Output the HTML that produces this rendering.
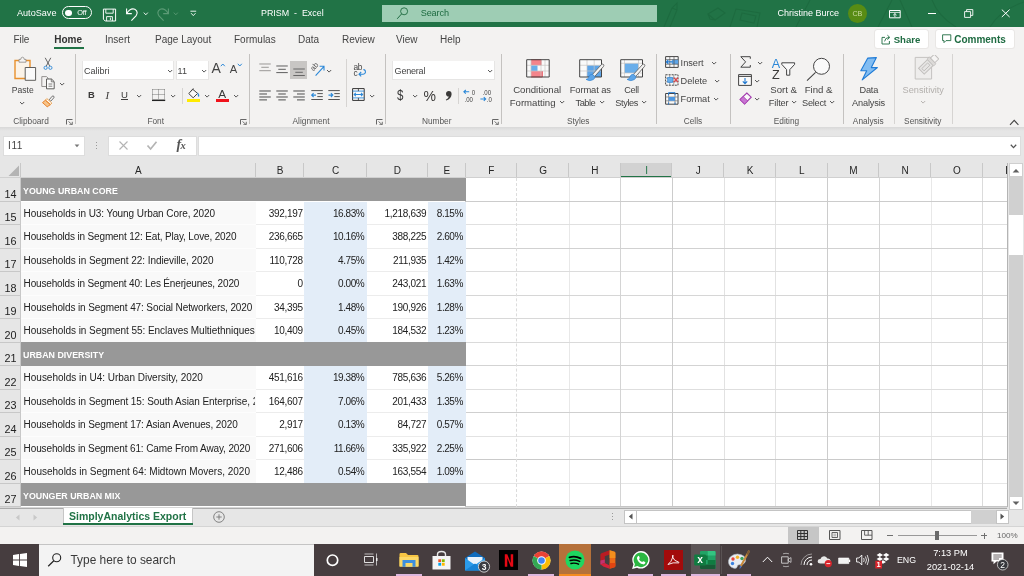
<!DOCTYPE html>
<html>
<head>
<meta charset="utf-8">
<title>PRISM - Excel</title>
<style>
*{box-sizing:border-box;margin:0;padding:0}
html,body{width:1024px;height:576px;overflow:hidden;background:#fff}
body{font-family:"Liberation Sans",sans-serif;font-size:10px;color:#323130;position:relative}
.abs,.t,#app div,#app span,#app svg{position:absolute}
#app{position:absolute;left:0;top:0;width:1024px;height:576px;overflow:hidden}
.t{white-space:pre;line-height:1}
/* title bar */
#title{left:0;top:0;width:1024px;height:27px;background:#217346}
#title .t{color:#fff;font-size:9.2px}
/* tabs */
#tabs{left:0;top:27px;width:1024px;height:25px;background:#f3f2f1}
#tabs .t{font-size:10px;top:8px;color:#444}
/* ribbon */
#ribbon{left:0;top:52px;width:1024px;height:75px;background:#f3f2f1}
#ribbon .t{font-size:9px;color:#444}
#ribbon .sep{width:1px;top:3px;height:69px;background:#c8c6c4}
#ribbon .glabel{font-size:8.3px;color:#555;top:65px}
/* formula bar */
#fbar{left:0;top:127px;width:1024px;height:36px;background:#e6e6e6}
/* grid */
#grid{left:0;top:163px;width:1007px;height:344px;background:#fff;overflow:hidden}
#colhdr{left:0;top:0;width:1007px;height:15px;background:#e6e6e6}
#colhdr .t{font-size:10px;color:#222;top:3px;text-align:center}
#rowhdr{left:0;top:15px;width:21px;height:330px;background:#e6e6e6}
#rowhdr .t{font-size:11.5px;color:#222;left:0;width:20px;text-align:center}
.cell{font-size:10px;color:#222}

.ch{font-size:10px;text-align:center}
.hl{height:1px;background:#d9d9d9}
.vl{width:1px;background:#d9d9d9}
.vl.dash{background:none;border-left:1px dashed #dcdcdc}
.rn{left:0;width:21px;text-align:center;font-size:10.8px;color:#222}
.hd{font-weight:bold;color:#fff;font-size:10px}
.lb{letter-spacing:-0.05px}
.nm{text-align:right;letter-spacing:-0.3px}
.pc{letter-spacing:-0.45px}
.ul{top:30px;height:2px;background:#dcb6de}
/* bottom */
#sheetbar{left:0;top:507px;width:1024px;height:19px;background:#e6e6e6}
#status{left:0;top:526px;width:1024px;height:18px;background:#f3f2f1}
#taskbar{left:0;top:544px;width:1024px;height:32px;background:#463d3f}
</style>
</head>
<body>
<div id="app">

<!-- TITLE BAR -->
<div id="title">
  <!-- faint doodle pattern -->
  <svg style="left:560px;top:0" width="464" height="27" viewBox="0 0 464 27"><g fill="none" stroke="#1d6a3f" stroke-width="1.1" opacity="0.9">
    <path d="M104 27L112 8L117 3L117 10L110 27M112 8L117 10"/><path d="M148 14L158 8L165 13L155 20Z M148 14L150 19L155 20"/><path d="M170 27L176 9L200 13L197 27M182 13L196 16L194 23L180 20Z"/>
    <path d="M236 27L250 0M318 27L332 0M340 0L352 27"/><path d="M372 0Q378 16 396 27M430 27Q440 10 464 2"/></g></svg>
  <span class="t" style="left:17px;top:8.6px;font-size:9.1px">AutoSave</span>
  <!-- toggle -->
  <div style="left:62px;top:6.3px;width:30px;height:12.6px;border:1px solid #fff;border-radius:7px"></div>
  <div style="left:65.3px;top:9.6px;width:6.4px;height:6.4px;border-radius:3.2px;background:#fff"></div>
  <span class="t" style="left:77.3px;top:9.2px;font-size:7.4px;letter-spacing:-0.2px">Off</span>
  <!-- save -->
  <svg style="left:102px;top:7.5px" width="15" height="14" viewBox="0 0 15 14"><path d="M1.4 1.1H13.6V13H3.2L1.4 11.2Z" fill="none" stroke="#fff" stroke-width="1"/><path d="M3.8 1.1V5.2H11.2V1.1M4.6 13V8.6H10.4V13M8.4 9.6V12" fill="none" stroke="#fff" stroke-width="0.9"/></svg>
  <!-- undo -->
  <svg style="left:125px;top:7px" width="14" height="15" viewBox="0 0 14 15"><path d="M1.6 1.4V6.6H6.8" fill="none" stroke="#fff" stroke-width="1.1"/><path d="M1.8 6.4Q5.2 0.8 9.8 2.2Q13.6 4.4 11.2 8.6L6.4 13.6" fill="none" stroke="#fff" stroke-width="1.1"/></svg>
  <svg style="left:142.5px;top:11.5px" width="6" height="4" viewBox="0 0 6 4"><path d="M0.8 0.6L2.8 2.8L4.8 0.6" fill="none" stroke="#fff" stroke-width="0.9"/></svg>
  <!-- redo (dim) -->
  <svg style="left:156px;top:7px" width="14" height="15" viewBox="0 0 14 15"><path d="M12.4 1.4V6.6H7.2" fill="none" stroke="#5c9b76" stroke-width="1.1"/><path d="M12.2 6.4Q8.8 0.8 4.2 2.2Q0.4 4.4 2.8 8.6L7.6 13.6" fill="none" stroke="#5c9b76" stroke-width="1.1"/></svg>
  <svg style="left:173px;top:11.5px" width="6" height="4" viewBox="0 0 6 4"><path d="M0.8 0.6L2.8 2.8L4.8 0.6" fill="none" stroke="#5c9b76" stroke-width="0.9"/></svg>
  <!-- customize -->
  <svg style="left:190px;top:10px" width="7" height="7" viewBox="0 0 7 7"><path d="M0.4 1.2H6.2" stroke="#fff" stroke-width="0.9"/><path d="M1.1 3.2L3.3 5.6L5.5 3.2" fill="none" stroke="#fff" stroke-width="0.9"/></svg>
  <span class="t" style="left:261px;top:8.7px;font-size:8.9px">PRISM  -  Excel</span>
  <div style="left:382px;top:5px;width:275px;height:17.3px;background:#9ecdb4"></div>
  <svg style="left:396px;top:6px" width="14" height="14" viewBox="0 0 14 14"><circle cx="8.1" cy="5.3" r="3.5" fill="none" stroke="#1e6b41" stroke-width="0.9"/><path d="M5.6 7.9L1.2 12.8" stroke="#1e6b41" stroke-width="1"/></svg>
  <span class="t" style="left:420.7px;top:9px;font-size:9.1px;letter-spacing:-0.1px;color:#1e6b41">Search</span>
  <span class="t" style="left:777.5px;top:8.7px;font-size:9px">Christine Burce</span>
  <div style="left:848px;top:3.8px;width:19px;height:19px;border-radius:10px;background:#588c14"></div>
  <span class="t" style="left:852.6px;top:10px;font-size:7.2px;color:#c6d99e;letter-spacing:-0.2px">CB</span>
  <!-- ribbon display -->
  <svg style="left:889px;top:9.5px" width="12" height="9" viewBox="0 0 12 9"><path d="M0.5 0.5H11.2V7.8H0.5Z" fill="none" stroke="#fff" stroke-width="1"/><path d="M0.5 2.4H11.2" stroke="#fff" stroke-width="0.8"/><path d="M5.9 7V3.6M4.2 5.2L5.9 3.5L7.6 5.2" fill="none" stroke="#fff" stroke-width="0.9"/></svg>
  <div style="left:927.5px;top:13px;width:8px;height:1px;background:#fff"></div>
  <svg style="left:964px;top:9px" width="10" height="9" viewBox="0 0 10 9"><path d="M0.6 2.6H6.6V8.4H0.6Z" fill="none" stroke="#fff" stroke-width="0.9"/><path d="M2.6 2.6V0.6H8.8V6.4H6.6" fill="none" stroke="#fff" stroke-width="0.9"/></svg>
  <svg style="left:1000.5px;top:9px" width="10" height="9" viewBox="0 0 10 9"><path d="M0.8 0.6L8.6 8M8.6 0.6L0.8 8" stroke="#fff" stroke-width="1"/></svg>
</div>

<!-- TABS -->
<div id="tabs">
  <span class="t" style="left:13.6px;font-size:10px;letter-spacing:-0.1px">File</span>
  <span class="t" style="left:54.2px;font-weight:bold;color:#333">Home</span>
  <div style="left:54px;top:20.3px;width:30px;height:2.1px;background:#217346"></div>
  <span class="t" style="left:105px">Insert</span>
  <span class="t" style="left:155px">Page Layout</span>
  <span class="t" style="left:234px">Formulas</span>
  <span class="t" style="left:298px">Data</span>
  <span class="t" style="left:342px">Review</span>
  <span class="t" style="left:396px">View</span>
  <span class="t" style="left:440px">Help</span>
  <div style="left:875px;top:3px;width:53px;height:18px;background:#fff;border-radius:2.5px;box-shadow:0 0 0 1px #e9e7e5"></div>
  <div style="left:935.5px;top:3px;width:78.8px;height:18px;background:#fff;border-radius:2.5px;box-shadow:0 0 0 1px #e9e7e5"></div>
  <svg style="left:880.5px;top:6.5px" width="11" height="11" viewBox="0 0 11 11"><path d="M4 3.4H1V10H8.4V7" fill="none" stroke="#1e6b41" stroke-width="0.9"/><path d="M3.6 7.4Q4 3.6 8 3.4M6.4 1.2L8.8 3.4L6.4 5.6" fill="none" stroke="#1e6b41" stroke-width="0.9"/></svg>
  <span class="t" style="left:893.7px;top:7.6px;font-size:9.6px;font-weight:bold;color:#1e6b41">Share</span>
  <svg style="left:941.5px;top:7px" width="10" height="10" viewBox="0 0 10 10"><path d="M0.6 0.8H8.8V6.6H4L2 8.6V6.6H0.6Z" fill="none" stroke="#1e6b41" stroke-width="0.9"/></svg>
  <span class="t" style="left:954.2px;top:8px;font-size:10px;font-weight:bold;color:#1e6b41">Comments</span>
</div>

<!-- RIBBON -->
<div id="ribbon">
<!--RIB-START-->
<svg style="left:13.0px;top:4.0px" width="24" height="26" viewBox="0 0 24 26"><path d="M2 4.5H17V22.5H2Z" fill="#fbf3e8" stroke="#e8912d" stroke-width="1.4"/><path d="M6 6.2V3.4H7.7Q7.9 1.2 9.5 1.2Q11.1 1.2 11.3 3.4H13V6.2Z" fill="#f5f4f3" stroke="#8a8886" stroke-width="0.8"/><path d="M12.2 11.5H22.6V24.3H12.2Z" fill="#fafafa" stroke="#5f5e5c" stroke-width="1"/></svg>
<span class="t" style="top:34px;font-size:8.6px;color:#444;left:-77.2px;width:200px;text-align:center;">Paste</span>
<svg style="left:19.4px;top:48.5px" width="6.2" height="4.1"><path d="M1 1L3.1 3.1L5.2 1" fill="none" stroke="#505050" stroke-width="0.95"/></svg>
<svg style="left:43.0px;top:5.0px" width="10" height="14" viewBox="0 0 10 14"><path d="M2.2 0.8L6.8 9.2M7.8 0.8L3.2 9.2" fill="none" stroke="#555" stroke-width="0.9"/><circle cx="2.6" cy="10.8" r="1.6" fill="none" stroke="#2b88d8" stroke-width="0.9"/><circle cx="7.4" cy="10.8" r="1.6" fill="none" stroke="#2b88d8" stroke-width="0.9"/></svg>
<svg style="left:41.0px;top:24.0px" width="15" height="14" viewBox="0 0 15 14"><path d="M0.8 0.6H5.5L7 2V10.5H0.8Z" fill="#f3f2f1" stroke="#8a8886" stroke-width="0.9"/><path d="M5.5 3H10.5L13.2 5.6V12.8H5.5Z" fill="#fafafa" stroke="#5f5e5c" stroke-width="1"/><path d="M10.3 3V5.8H13M7.5 8H11.3M7.5 10.2H11.3" fill="none" stroke="#5f5e5c" stroke-width="0.8"/></svg>
<svg style="left:58.9px;top:29.5px" width="6.2" height="4.1"><path d="M1 1L3.1 3.1L5.2 1" fill="none" stroke="#505050" stroke-width="0.95"/></svg>
<svg style="left:42.0px;top:43.0px" width="13" height="13" viewBox="0 0 13 13"><path d="M7.2 4.8L10.2 1.2Q11 0.5 11.8 1.3Q12.4 2 11.8 2.8L8.8 6.2Z" fill="#f3f2f1" stroke="#555" stroke-width="0.8"/><path d="M4.8 3.6L9.8 8L8.6 9.4L3.6 5Z" fill="#fff" stroke="#e8912d" stroke-width="0.8"/><path d="M3.3 5.3L8.3 9.7L5.2 11.8L0.5 7.6Z" fill="#f6c48a" stroke="#e8791d" stroke-width="0.9"/></svg>
<span class="t" style="top:65px;font-size:8.3px;color:#555;left:-69.0px;width:200px;text-align:center;">Clipboard</span>
<svg style="left:66.0px;top:66.5px" width="7" height="6" viewBox="0 0 7 6"><path d="M0.5 5.5V0.5H6.5" fill="none" stroke="#666" stroke-width="1"/><path d="M2.5 2.5L6 5.5M6.3 2.8V5.7H3.4" fill="none" stroke="#666" stroke-width="0.9"/></svg>
<div style="left:74.9px;top:2px;width:1px;height:70px;background:#c4c2c0"></div>
<div style="left:82.2px;top:9.2px;width:92px;height:18.4px;background:#fff;border:1px solid #e6e5e4;border-top:0"></div>
<span class="t" style="top:15px;font-size:9px;color:#444;left:84.0px;">Calibri</span>
<svg style="left:167.2px;top:16.5px" width="6.2" height="4.1"><path d="M1 1L3.1 3.1L5.2 1" fill="none" stroke="#505050" stroke-width="0.95"/></svg>
<div style="left:175.8px;top:9.2px;width:33px;height:18.4px;background:#fff;border:1px solid #e6e5e4;border-top:0"></div>
<span class="t" style="top:15px;font-size:9px;color:#444;left:177.6px;">11</span>
<svg style="left:201.2px;top:16.5px" width="6.2" height="4.1"><path d="M1 1L3.1 3.1L5.2 1" fill="none" stroke="#505050" stroke-width="0.95"/></svg>
<span class="t" style="top:9px;font-size:14px;color:#444;left:211.6px;">A</span>
<svg style="left:219.5px;top:11.0px" width="6" height="4" viewBox="0 0 6 4"><path d="M0.8 3.2L2.8 1L4.8 3.2" fill="none" stroke="#2b88d8" stroke-width="1"/></svg>
<span class="t" style="top:12px;font-size:11.2px;color:#444;left:229.8px;">A</span>
<svg style="left:236.5px;top:11.0px" width="6" height="4" viewBox="0 0 6 4"><path d="M0.8 0.8L2.8 3L4.8 0.8" fill="none" stroke="#2b88d8" stroke-width="1"/></svg>
<span class="t" style="top:38px;font-size:9.4px;color:#3b3a39;font-weight:bold;left:88.0px;">B</span>
<span class="t" style="top:37px;font-size:11px;color:#3b3a39;font-style:italic;left:105.6px;font-family:'Liberation Serif',serif;margin-top:1px;">I</span>
<span class="t" style="top:38px;font-size:9.6px;color:#3b3a39;left:121.0px;">U</span>
<div style="left:121px;top:47.3px;width:7px;height:1px;background:#3b3a39"></div>
<svg style="left:135.7px;top:42.2px" width="6.2" height="4.1"><path d="M1 1L3.1 3.1L5.2 1" fill="none" stroke="#505050" stroke-width="0.95"/></svg>
<svg style="left:152.0px;top:36.0px" width="14" height="14" viewBox="0 0 14 14"><path d="M0.5 1.5H13M0.5 6.5H13M0.5 1.5V11M6.5 1.5V11M12.5 1.5V11" fill="none" stroke="#6a6a6a" stroke-width="0.9" stroke-dasharray="1 1"/><path d="M0 12.3H13.2" stroke="#222" stroke-width="1.5"/></svg>
<svg style="left:169.9px;top:42.2px" width="6.2" height="4.1"><path d="M1 1L3.1 3.1L5.2 1" fill="none" stroke="#505050" stroke-width="0.95"/></svg>
<div style="left:182.1px;top:36px;width:1px;height:16px;background:#d6d4d2"></div>
<svg style="left:188.0px;top:36.0px" width="13" height="11" viewBox="0 0 13 11"><path d="M4.6 1.2L9.6 5.4L5.2 9.8L0.8 5.6Z" fill="#fafafa" stroke="#444" stroke-width="1"/><path d="M2.6 3.4L5.8 0.6" stroke="#444" stroke-width="0.9"/><path d="M9.8 4.2Q12 6.8 11 9Q9.2 8.4 9.8 4.2Z" fill="#2b88d8"/></svg>
<div style="left:186.8px;top:46.8px;width:12.8px;height:3.1px;background:#ffeb00"></div>
<svg style="left:204.1px;top:42.2px" width="6.2" height="4.1"><path d="M1 1L3.1 3.1L5.2 1" fill="none" stroke="#505050" stroke-width="0.95"/></svg>
<span class="t" style="top:37px;font-size:11.8px;color:#3b3a39;left:218.2px;">A</span>
<div style="left:215.9px;top:46.8px;width:13.1px;height:3.1px;background:#f0121b"></div>
<svg style="left:233.3px;top:42.2px" width="6.2" height="4.1"><path d="M1 1L3.1 3.1L5.2 1" fill="none" stroke="#505050" stroke-width="0.95"/></svg>
<span class="t" style="top:65px;font-size:8.3px;color:#555;left:55.7px;width:200px;text-align:center;">Font</span>
<svg style="left:240.0px;top:66.5px" width="7" height="6" viewBox="0 0 7 6"><path d="M0.5 5.5V0.5H6.5" fill="none" stroke="#666" stroke-width="1"/><path d="M2.5 2.5L6 5.5M6.3 2.8V5.7H3.4" fill="none" stroke="#666" stroke-width="0.9"/></svg>
<div style="left:249.3px;top:2px;width:1px;height:70px;background:#c4c2c0"></div>
<svg style="left:258.6px;top:10.9px" width="13" height="9.699999999999996" viewBox="0 0 13 9.699999999999996"><path d="M0.3 1.0H11.8" stroke="#8a8886" stroke-width="0.85"/><path d="M2.3 4.3H9.8" stroke="#8a8886" stroke-width="0.85"/><path d="M0.3 7.7H11.8" stroke="#8a8886" stroke-width="0.85"/></svg>
<svg style="left:275.6px;top:13.0px" width="13" height="9.599999999999994" viewBox="0 0 13 9.599999999999994"><path d="M0.3 1.0H11.8" stroke="#444" stroke-width="0.85"/><path d="M2.3 4.3H9.8" stroke="#444" stroke-width="0.85"/><path d="M0.3 7.6H11.8" stroke="#444" stroke-width="0.85"/></svg>
<div style="left:290px;top:9.299999999999997px;width:17px;height:18px;background:#c8c6c4"></div>
<svg style="left:292.8px;top:16.3px" width="13" height="9.5" viewBox="0 0 13 9.5"><path d="M0.3 1.0H11.8" stroke="#555" stroke-width="0.85"/><path d="M2.3 4.3H9.8" stroke="#555" stroke-width="0.85"/><path d="M0.3 7.5H11.8" stroke="#555" stroke-width="0.85"/></svg>
<svg style="left:310.0px;top:9.0px" width="16" height="16" viewBox="0 0 16 16"><text x="0" y="0" font-family="Liberation Sans" font-size="7.6" fill="#555" transform="translate(3.6,10.6) rotate(-50)">ab</text><path d="M5.6 14.6L13.6 5.8M9.6 5.2L14 5.2L14 9.6" fill="none" stroke="#2b88d8" stroke-width="1.1"/></svg>
<svg style="left:326.1px;top:16.5px" width="6.2" height="4.1"><path d="M1 1L3.1 3.1L5.2 1" fill="none" stroke="#505050" stroke-width="0.95"/></svg>
<div style="left:346.0px;top:7px;width:1px;height:48px;background:#d6d4d2"></div>
<svg style="left:353.0px;top:10.5px" width="14" height="15" viewBox="0 0 14 15"><text x="0.4" y="6.8" font-family="Liberation Sans" font-size="8.4" fill="#444" letter-spacing="-0.3">ab</text><text x="0.6" y="13.4" font-family="Liberation Sans" font-size="8.4" fill="#444">c</text><path d="M10.4 6.6H11Q12.6 7 12.5 9.2Q12.2 11.2 10.2 11.2H6.2M8.2 9L6 11.2L8.2 13.4" fill="none" stroke="#2b88d8" stroke-width="1.1"/></svg>
<svg style="left:258.6px;top:37.6px" width="13" height="11.900000000000006" viewBox="0 0 13 11.900000000000006"><path d="M0.3 1.0H11.8" stroke="#444" stroke-width="0.95"/><path d="M0.3 4.0H8.0" stroke="#444" stroke-width="0.95"/><path d="M0.3 7.0H11.8" stroke="#444" stroke-width="0.95"/><path d="M0.3 9.9H8.0" stroke="#444" stroke-width="0.95"/></svg>
<svg style="left:275.6px;top:37.6px" width="13" height="11.900000000000006" viewBox="0 0 13 11.900000000000006"><path d="M0.3 1.0H11.8" stroke="#444" stroke-width="0.95"/><path d="M2.3 4.0H9.8" stroke="#444" stroke-width="0.95"/><path d="M0.3 7.0H11.8" stroke="#444" stroke-width="0.95"/><path d="M2.3 9.9H9.8" stroke="#444" stroke-width="0.95"/></svg>
<svg style="left:292.8px;top:37.6px" width="13" height="11.900000000000006" viewBox="0 0 13 11.900000000000006"><path d="M0.3 1.0H11.8" stroke="#444" stroke-width="0.95"/><path d="M4.0 4.0H11.8" stroke="#444" stroke-width="0.95"/><path d="M0.3 7.0H11.8" stroke="#444" stroke-width="0.95"/><path d="M4.0 9.9H11.8" stroke="#444" stroke-width="0.95"/></svg>
<svg style="left:311.0px;top:37.0px" width="13" height="12" viewBox="0 0 13 12"><path d="M0.3 1.6H11.8M6.3 4.6H11.8M6.3 7.6H11.8M0.3 10.5H11.8" stroke="#555" stroke-width="1"/><path d="M5 6.1H0.8M2.6 4.2L0.7 6.1L2.6 8" fill="none" stroke="#2b88d8" stroke-width="1.1"/></svg>
<svg style="left:328.3px;top:37.0px" width="13" height="12" viewBox="0 0 13 12"><path d="M0.3 1.6H11.8M6.3 4.6H11.8M6.3 7.6H11.8M0.3 10.5H11.8" stroke="#555" stroke-width="1"/><path d="M0.5 6.1H4.7M2.9 4.2L4.8 6.1L2.9 8" fill="none" stroke="#2b88d8" stroke-width="1.1"/></svg>
<svg style="left:351.5px;top:36.3px" width="13" height="13" viewBox="0 0 13 13"><path d="M0.6 0.6H12.2V12.4H0.6Z" fill="#fafafa" stroke="#333" stroke-width="1"/><path d="M0.6 3.1H12.2M0.6 9.9H12.2" stroke="#2b88d8" stroke-width="0.9"/><path d="M6.4 0.6V3.1M6.4 9.9V12.4" stroke="#333" stroke-width="0.8"/><path d="M2.2 6.5H10.6M3.8 4.9L2.2 6.5L3.8 8.1M9 4.9L10.6 6.5L9 8.1" fill="none" stroke="#2b88d8" stroke-width="1.1"/></svg>
<svg style="left:369.3px;top:42.2px" width="6.2" height="4.1"><path d="M1 1L3.1 3.1L5.2 1" fill="none" stroke="#505050" stroke-width="0.95"/></svg>
<span class="t" style="top:65px;font-size:8.3px;color:#555;left:211.0px;width:200px;text-align:center;">Alignment</span>
<svg style="left:376.0px;top:66.5px" width="7" height="6" viewBox="0 0 7 6"><path d="M0.5 5.5V0.5H6.5" fill="none" stroke="#666" stroke-width="1"/><path d="M2.5 2.5L6 5.5M6.3 2.8V5.7H3.4" fill="none" stroke="#666" stroke-width="0.9"/></svg>
<div style="left:384.9px;top:2px;width:1px;height:70px;background:#c4c2c0"></div>
<div style="left:392.4px;top:9.2px;width:102.4px;height:18.4px;background:#fff;border:1px solid #e6e5e4;border-top:0"></div>
<span class="t" style="top:15px;font-size:9px;color:#444;left:394.6px;letter-spacing:-0.2px;">General</span>
<svg style="left:486.9px;top:16.5px" width="6.2" height="4.1"><path d="M1 1L3.1 3.1L5.2 1" fill="none" stroke="#505050" stroke-width="0.95"/></svg>
<span class="t" style="top:36px;font-size:14.4px;color:#333;left:397.0px;transform:scaleX(0.8);transform-origin:0 0;">$</span>
<svg style="left:411.9px;top:42.2px" width="6.2" height="4.1"><path d="M1 1L3.1 3.1L5.2 1" fill="none" stroke="#505050" stroke-width="0.95"/></svg>
<span class="t" style="top:37px;font-size:14px;color:#3b3a39;left:423.6px;letter-spacing:0;">%</span>
<svg style="left:443.5px;top:38.0px" width="9" height="12" viewBox="0 0 9 12"><path d="M4.8 1Q7.6 1 7.6 4.2Q7.4 8.4 2.2 10.6L1.8 9.8Q4.6 8.4 4.8 6.6Q2 6.6 2 3.8Q2.2 1 4.8 1Z" fill="#3b3a39"/></svg>
<div style="left:458.0px;top:36px;width:1px;height:16px;background:#d6d4d2"></div>
<svg style="left:462.5px;top:36.5px" width="13" height="14" viewBox="0 0 13 14"><path d="M6.2 2.8H1M2.8 1L0.9 2.8L2.8 4.6" fill="none" stroke="#2b88d8" stroke-width="1.1"/><g transform="scale(0.78,1)"><text x="11.2" y="6.2" font-family="Liberation Sans" font-size="7.8" fill="#444">0</text><text x="2" y="13" font-family="Liberation Sans" font-size="7.8" fill="#444">.00</text></g></svg>
<svg style="left:480.0px;top:36.5px" width="13" height="14" viewBox="0 0 13 14"><g transform="scale(0.78,1)"><text x="3.4" y="6.2" font-family="Liberation Sans" font-size="7.8" fill="#444">.00</text><text x="8.6" y="13" font-family="Liberation Sans" font-size="7.8" fill="#444">.0</text></g><path d="M0.4 10H5.6M3.8 8.2L5.7 10L3.8 11.8" fill="none" stroke="#2b88d8" stroke-width="1.1"/></svg>
<span class="t" style="top:65px;font-size:8.3px;color:#555;left:336.7px;width:200px;text-align:center;">Number</span>
<svg style="left:492.0px;top:66.5px" width="7" height="6" viewBox="0 0 7 6"><path d="M0.5 5.5V0.5H6.5" fill="none" stroke="#666" stroke-width="1"/><path d="M2.5 2.5L6 5.5M6.3 2.8V5.7H3.4" fill="none" stroke="#666" stroke-width="0.9"/></svg>
<div style="left:501.1px;top:2px;width:1px;height:70px;background:#c4c2c0"></div>
<svg style="left:525.5px;top:6.5px" width="24" height="19" viewBox="0 0 24 19"><path d="M0.7 0.7H23.2V18H0.7Z" fill="#fafafa"/><path d="M5 0.7H15V6.3H5Z" fill="#f4848b"/><path d="M5 6.3H11.5V12H5Z" fill="#6aaeea"/><path d="M5 12H16.3V18H5Z" fill="#f4848b"/><path d="M5 0.7H15V6.3M5 18H16.3V12" fill="none" stroke="#e03a43" stroke-width="0.8"/><path d="M0.7 6.3H23.2M0.7 12H23.2M5 0.7V18M19 0.7V18M15 0.7V18" fill="none" stroke="#c8c6c4" stroke-width="0.7"/><path d="M0.7 0.7H23.2V18H0.7Z" fill="none" stroke="#444" stroke-width="1"/></svg>
<span class="t" style="top:33px;font-size:9.6px;color:#444;left:437.2px;width:200px;text-align:center;">Conditional</span>
<span class="t" style="top:46px;font-size:9.6px;color:#444;left:509.7px;">Formatting</span>
<svg style="left:558.9px;top:48.2px" width="6.2" height="4.1"><path d="M1 1L3.1 3.1L5.2 1" fill="none" stroke="#505050" stroke-width="0.95"/></svg>
<svg style="left:578.6px;top:6.5px" width="26" height="23" viewBox="0 0 26 23"><path d="M0.7 0.7H22.5V18H0.7Z" fill="#fafafa"/><path d="M8 6.3H22.5V18H8Z" fill="#5ea5e8"/><path d="M0.7 6.3H22.5M0.7 12H22.5M8 0.7V18M15.2 0.7V18" fill="none" stroke="#c8c6c4" stroke-width="0.7"/><path d="M0.7 0.7H22.5V18H0.7Z" fill="none" stroke="#444" stroke-width="1"/><path d="M13.3 15.6L22.4 5.6Q23.6 4.6 24.6 5.6Q25.2 6.6 24.4 7.6L15.6 17.6Z" fill="#f3f2f1" stroke="#555" stroke-width="0.8"/><path d="M13.6 15.2Q10.5 15 9.8 18.2Q9 20.2 7 20.4Q11 22.8 14.4 20.6Q16.4 19 15.8 17.4Z" fill="#5ea5e8" stroke="#2b7fd0" stroke-width="0.6"/></svg>
<span class="t" style="top:33px;font-size:9.4px;color:#444;left:490.3px;width:200px;text-align:center;letter-spacing:-0.1px;">Format as</span>
<span class="t" style="top:46px;font-size:9.4px;color:#444;left:575.5px;letter-spacing:-0.55px;">Table</span>
<svg style="left:598.9px;top:48.2px" width="6.2" height="4.1"><path d="M1 1L3.1 3.1L5.2 1" fill="none" stroke="#505050" stroke-width="0.95"/></svg>
<svg style="left:619.6px;top:6.5px" width="26" height="23" viewBox="0 0 26 23"><path d="M0.7 0.7H22.5V18H0.7Z" fill="#fafafa"/><path d="M4.5 4.3H18.5V14H4.5Z" fill="#6aaeea"/><path d="M0.7 4.3H22.5M0.7 14H22.5M4.5 0.7V18M18.5 0.7V18" fill="none" stroke="#c8c6c4" stroke-width="0.7"/><path d="M0.7 0.7H22.5V18H0.7Z" fill="none" stroke="#444" stroke-width="1"/><path d="M13.3 15.6L22.4 5.6Q23.6 4.6 24.6 5.6Q25.2 6.6 24.4 7.6L15.6 17.6Z" fill="#f3f2f1" stroke="#555" stroke-width="0.8"/><path d="M13.6 15.2Q10.5 15 9.8 18.2Q9 20.2 7 20.4Q11 22.8 14.4 20.6Q16.4 19 15.8 17.4Z" fill="#5ea5e8" stroke="#2b7fd0" stroke-width="0.6"/></svg>
<span class="t" style="top:34px;font-size:9.2px;color:#444;left:531.5px;width:200px;text-align:center;letter-spacing:-0.3px;">Cell</span>
<span class="t" style="top:47px;font-size:9.2px;color:#444;left:615.2px;letter-spacing:-0.35px;">Styles</span>
<svg style="left:641.4px;top:48.2px" width="6.2" height="4.1"><path d="M1 1L3.1 3.1L5.2 1" fill="none" stroke="#505050" stroke-width="0.95"/></svg>
<span class="t" style="top:65px;font-size:8.3px;color:#555;left:478.2px;width:200px;text-align:center;">Styles</span>
<div style="left:655.7px;top:2px;width:1px;height:70px;background:#c4c2c0"></div>
<svg style="left:664.6px;top:4.0px" width="14" height="12" viewBox="0 0 14 12"><path d="M0.6 0.6H13.2V11.4H0.6Z" fill="#fafafa" stroke="#444" stroke-width="1"/><path d="M6.8 3.6H13.2V8.2H6.8Z" fill="#5ea5e8"/><path d="M0.6 3.6H13.2M0.6 8.2H13.2M4.8 0.6V11.4M9 0.6V11.4" stroke="#555" stroke-width="0.7"/><path d="M7.6 5.9H1.4M3.4 3.9L1.3 5.9L3.4 7.9" fill="none" stroke="#1f78d1" stroke-width="1.1"/></svg>
<span class="t" style="top:7px;font-size:9.2px;color:#444;left:680.6px;">Insert</span>
<svg style="left:710.8px;top:8.8px" width="6.2" height="4.1"><path d="M1 1L3.1 3.1L5.2 1" fill="none" stroke="#505050" stroke-width="0.95"/></svg>
<svg style="left:664.6px;top:22.0px" width="14" height="12" viewBox="0 0 14 12"><path d="M0.6 0.8H13V11.2H0.6Z" fill="#fafafa" stroke="#444" stroke-width="1" stroke-dasharray="2 1"/><path d="M0.6 4.2H13M0.6 7.7H13M4.7 0.8V11.2M8.8 0.8V11.2" stroke="#777" stroke-width="0.7"/><path d="M2.6 3.4H7.6V8.4H2.6Z" fill="#6aaeea" stroke="#1f78d1" stroke-width="0.6"/><path d="M8.8 3.6L13 8.2M13 3.6L8.8 8.2" fill="none" stroke="#e03a43" stroke-width="1.1"/></svg>
<span class="t" style="top:25px;font-size:9.2px;color:#444;left:680.6px;">Delete</span>
<svg style="left:713.9px;top:26.8px" width="6.2" height="4.1"><path d="M1 1L3.1 3.1L5.2 1" fill="none" stroke="#505050" stroke-width="0.95"/></svg>
<svg style="left:664.6px;top:40.0px" width="14" height="13" viewBox="0 0 14 13"><path d="M0.6 1.5H13V12.2H0.6Z" fill="#fafafa" stroke="#444" stroke-width="1"/><path d="M0.6 5H13M0.6 8.8H13M3.6 1.5V12.2M10 1.5V12.2" stroke="#777" stroke-width="0.7"/><path d="M3.6 5H10V8.8H3.6Z" fill="#4c97e2"/><path d="M3.6 3.2V0.6H10V3.2M3.6 10.5V12.6M10 10.5V12.6" fill="none" stroke="#1f78d1" stroke-width="0.9"/></svg>
<span class="t" style="top:43px;font-size:9.2px;color:#444;left:680.6px;">Format</span>
<svg style="left:712.9px;top:44.5px" width="6.2" height="4.1"><path d="M1 1L3.1 3.1L5.2 1" fill="none" stroke="#505050" stroke-width="0.95"/></svg>
<span class="t" style="top:65px;font-size:8.3px;color:#555;left:593.0px;width:200px;text-align:center;">Cells</span>
<div style="left:730.0px;top:2px;width:1px;height:70px;background:#c4c2c0"></div>
<svg style="left:740.3px;top:4.0px" width="12" height="12" viewBox="0 0 12 12"><path d="M10.3 2.8V0.7H0.8L5.6 5.9L0.8 11.2H10.3V9" fill="none" stroke="#444" stroke-width="1"/></svg>
<svg style="left:756.5px;top:8.8px" width="6.2" height="4.1"><path d="M1 1L3.1 3.1L5.2 1" fill="none" stroke="#505050" stroke-width="0.95"/></svg>
<svg style="left:738.3px;top:22.0px" width="14" height="12" viewBox="0 0 14 12"><path d="M0.6 0.6H13.4V11.4H0.6Z" fill="#fafafa" stroke="#444" stroke-width="1"/><path d="M0.6 2.4H13.4" stroke="#444" stroke-width="1"/><path d="M7 4V9.6M4.8 7.4L7 9.7L9.2 7.4" fill="none" stroke="#1f78d1" stroke-width="1.1"/></svg>
<svg style="left:754.2px;top:26.8px" width="6.2" height="4.1"><path d="M1 1L3.1 3.1L5.2 1" fill="none" stroke="#505050" stroke-width="0.95"/></svg>
<svg style="left:738.8px;top:39.5px" width="13" height="13" viewBox="0 0 13 13"><path d="M7.8 1L12.2 5.2L5.6 12L1 7.6Z" fill="#fafafa" stroke="#a33cae" stroke-width="1.1"/><path d="M4.2 4.5L8.8 9L5.6 12L1 7.6Z" fill="#c874d2" stroke="#a33cae" stroke-width="0.8"/></svg>
<svg style="left:754.2px;top:44.5px" width="6.2" height="4.1"><path d="M1 1L3.1 3.1L5.2 1" fill="none" stroke="#505050" stroke-width="0.95"/></svg>
<span class="t" style="top:6px;font-size:12.6px;color:#2b88d8;left:771.8px;">A</span>
<span class="t" style="top:17px;font-size:12.6px;color:#3b3a39;left:772.0px;">Z</span>
<svg style="left:781.3px;top:10.0px" width="15" height="15" viewBox="0 0 15 15"><path d="M0.8 0.8H13.6V2.4L8.8 7.6V13.2H5.6V7.6L0.8 2.4Z" fill="#fafafa" stroke="#444" stroke-width="1"/></svg>
<span class="t" style="top:33px;font-size:9.6px;color:#444;left:683.6px;width:200px;text-align:center;">Sort &amp;</span>
<span class="t" style="top:47px;font-size:9.2px;color:#444;left:768.8px;letter-spacing:-0.12px;">Filter</span>
<svg style="left:791.1px;top:48.2px" width="6.2" height="4.1"><path d="M1 1L3.1 3.1L5.2 1" fill="none" stroke="#505050" stroke-width="0.95"/></svg>
<svg style="left:806.0px;top:4.5px" width="25" height="25" viewBox="0 0 25 25"><circle cx="15.5" cy="9.3" r="8" fill="#fafafa" stroke="#444" stroke-width="1"/><path d="M9.6 15.4L1 23.6" stroke="#444" stroke-width="1.1"/></svg>
<span class="t" style="top:33px;font-size:9.6px;color:#444;left:718.6px;width:200px;text-align:center;">Find &amp;</span>
<span class="t" style="top:47px;font-size:9.2px;color:#444;left:802.0px;letter-spacing:-0.25px;">Select</span>
<svg style="left:828.5px;top:48.2px" width="6.2" height="4.1"><path d="M1 1L3.1 3.1L5.2 1" fill="none" stroke="#505050" stroke-width="0.95"/></svg>
<span class="t" style="top:65px;font-size:8.3px;color:#555;left:686.5px;width:200px;text-align:center;">Editing</span>
<div style="left:842.9px;top:2px;width:1px;height:70px;background:#c4c2c0"></div>
<svg style="left:859.5px;top:4.5px" width="19" height="24" viewBox="0 0 19 24"><path d="M7.8 1.1L16.4 0.6L11.3 10.6L17.4 10.5L2.2 22.9L6.7 13.7L0.8 13.7Z" fill="#82bdf2" stroke="#1f7bd6" stroke-width="1.1" stroke-linejoin="round"/></svg>
<span class="t" style="top:34px;font-size:9.2px;color:#444;left:768.8px;width:200px;text-align:center;letter-spacing:-0.15px;">Data</span>
<span class="t" style="top:47px;font-size:9.2px;color:#444;left:768.5px;width:200px;text-align:center;letter-spacing:-0.15px;">Analysis</span>
<span class="t" style="top:65px;font-size:8.3px;color:#555;left:768.3px;width:200px;text-align:center;">Analysis</span>
<div style="left:893.9px;top:2px;width:1px;height:70px;background:#d6d4d2"></div>
<svg style="left:914.0px;top:3.0px" width="25" height="26" viewBox="0 0 25 26"><path d="M1.2 2.4H17.6V24H1.2Z" fill="#eeedec" stroke="#c4c2c0" stroke-width="1"/><g transform="translate(13.6,10.2) rotate(-44) scale(1.08)"><path d="M-8 -3.8H3.5V3.8H-8Z" fill="#e6e5e4" stroke="#c0bebc" stroke-width="0.9"/><path d="M3.5 -4.4H6.5V4.4H3.5Z" fill="#dcdad8" stroke="#c0bebc" stroke-width="0.7"/><path d="M6.5 -3H11.5V3H6.5Z" fill="#f5f4f3" stroke="#c0bebc" stroke-width="0.9"/><path d="M-6 -1.5H1.5V1.5H-6Z" fill="none" stroke="#bcbab8" stroke-width="0.8"/></g></svg>
<span class="t" style="top:34px;font-size:9.2px;color:#b3b0ad;left:823.3px;width:200px;text-align:center;">Sensitivity</span>
<svg style="left:920.2px;top:47.8px" width="6.2" height="4.1"><path d="M1 1L3.1 3.1L5.2 1" fill="none" stroke="#b3b0ad" stroke-width="0.95"/></svg>
<span class="t" style="top:65px;font-size:8.3px;color:#555;left:822.8px;width:200px;text-align:center;">Sensitivity</span>
<div style="left:951.8px;top:2px;width:1px;height:70px;background:#d6d4d2"></div>
<svg style="left:1008.5px;top:67.0px" width="11" height="7" viewBox="0 0 11 7"><path d="M1 5.8L5.2 1.4L9.4 5.8" fill="none" stroke="#444" stroke-width="1.1"/></svg>
<!--RIB-END-->
</div>

<!-- FORMULA BAR -->
<div id="fbar">
  <div style="left:0;top:0;width:1024px;height:4px;background:linear-gradient(#d8d8d8,#e6e6e6)"></div>
  <!-- name box -->
  <div style="left:4px;top:10px;width:80px;height:17.5px;background:#fff;box-shadow:0 0 0 1px #dddddd"></div>
  <span class="t" style="left:8px;top:14px;font-size:10px;letter-spacing:0.6px;color:#444">I11</span>
  <svg style="left:74px;top:17px" width="6" height="4" viewBox="0 0 6 4"><path d="M0.6 0.6H5.4L3 3.2Z" fill="#777"/></svg>
  <!-- dots -->
  <div style="left:96px;top:14.5px;width:1px;height:1px;background:#9a9a9a;box-shadow:0 3px 0 #9a9a9a,0 6px 0 #9a9a9a"></div>
  <!-- buttons -->
  <div style="left:109px;top:10px;width:87px;height:17.5px;background:#fff;box-shadow:0 0 0 1px #dddddd"></div>
  <svg style="left:118px;top:13px" width="11" height="11" viewBox="0 0 11 11"><path d="M1.5 1.5L9.5 9.5M9.5 1.5L1.5 9.5" stroke="#b4b4b4" stroke-width="1.1" fill="none"/></svg>
  <svg style="left:146px;top:13px" width="12" height="11" viewBox="0 0 12 11"><path d="M1.5 5.5L4.6 9L10.5 1.8" stroke="#b4b4b4" stroke-width="1.7" fill="none"/></svg>
  <span class="t" style="left:176.5px;top:10px;font:italic bold 14px 'Liberation Serif',serif;color:#555;letter-spacing:-0.6px">f<span style="position:static;font-size:10.5px">x</span></span>
  <!-- formula input -->
  <div style="left:199px;top:10px;width:821px;height:17.5px;background:#fff;box-shadow:0 0 0 1px #dddddd"></div>
  <svg style="left:1009.5px;top:16.5px" width="7" height="5" viewBox="0 0 7 5"><path d="M0.8 0.8L3.5 3.6L6.2 0.8" stroke="#555" stroke-width="1.3" fill="none"/></svg>
</div>

<!-- GRID -->
<div id="grid">
<!--GRID-START-->
<div id="colhdr" style="height:15px"></div>
<div style="left:620.7px;top:0;width:51.7px;height:15px;background:#d2d2d2"></div>
<div style="left:620.7px;top:13px;width:51.7px;height:2px;background:#217346"></div>
<span class="t ch" style="left:21.0px;width:234.8px;top:3px;color:#262626">A</span>
<span class="t ch" style="left:255.8px;width:48.6px;top:3px;color:#262626">B</span>
<div style="left:255px;top:0;width:1px;height:14px;background:#c8c8c8"></div>
<span class="t ch" style="left:304.4px;width:62.4px;top:3px;color:#262626">C</span>
<div style="left:303px;top:0;width:1px;height:14px;background:#c8c8c8"></div>
<span class="t ch" style="left:366.8px;width:61.2px;top:3px;color:#262626">D</span>
<div style="left:366px;top:0;width:1px;height:14px;background:#c8c8c8"></div>
<span class="t ch" style="left:428.0px;width:37.5px;top:3px;color:#262626">E</span>
<div style="left:427px;top:0;width:1px;height:14px;background:#c8c8c8"></div>
<span class="t ch" style="left:465.5px;width:51.7px;top:3px;color:#262626">F</span>
<div style="left:465px;top:0;width:1px;height:14px;background:#c8c8c8"></div>
<span class="t ch" style="left:517.2px;width:51.8px;top:3px;color:#262626">G</span>
<div style="left:516px;top:0;width:1px;height:14px;background:#c8c8c8"></div>
<span class="t ch" style="left:569.0px;width:51.7px;top:3px;color:#262626">H</span>
<div style="left:568px;top:0;width:1px;height:14px;background:#c8c8c8"></div>
<span class="t ch" style="left:620.7px;width:51.7px;top:3px;color:#217346">I</span>
<div style="left:620px;top:0;width:1px;height:14px;background:#c8c8c8"></div>
<span class="t ch" style="left:672.4px;width:51.7px;top:3px;color:#262626">J</span>
<div style="left:671px;top:0;width:1px;height:14px;background:#c8c8c8"></div>
<span class="t ch" style="left:724.1px;width:51.8px;top:3px;color:#262626">K</span>
<div style="left:723px;top:0;width:1px;height:14px;background:#c8c8c8"></div>
<span class="t ch" style="left:775.9px;width:51.7px;top:3px;color:#262626">L</span>
<div style="left:775px;top:0;width:1px;height:14px;background:#c8c8c8"></div>
<span class="t ch" style="left:827.6px;width:51.7px;top:3px;color:#262626">M</span>
<div style="left:827px;top:0;width:1px;height:14px;background:#c8c8c8"></div>
<span class="t ch" style="left:879.3px;width:51.7px;top:3px;color:#262626">N</span>
<div style="left:878px;top:0;width:1px;height:14px;background:#c8c8c8"></div>
<span class="t ch" style="left:931.0px;width:51.8px;top:3px;color:#262626">O</span>
<div style="left:930px;top:0;width:1px;height:14px;background:#c8c8c8"></div>
<span class="t ch" style="left:982.8px;width:51.7px;top:3px;color:#262626">P</span>
<div style="left:982px;top:0;width:1px;height:14px;background:#c8c8c8"></div>
<svg style="left:8px;top:2px" width="12" height="12" viewBox="0 0 12 12"><path d="M11 0.5V11H0.5Z" fill="#b4b4b4"/></svg>
<div style="left:20px;top:0;width:1px;height:14px;background:#c8c8c8"></div>
<div style="left:0;top:14px;width:1007px;height:1px;background:#d0d0d0"></div>
<div style="left:0;top:15px;width:20px;height:329px;background:#e6e6e6"></div>
<div style="top:38px;left:465px;width:542px;height:1px;background:#cccccc"></div>
<div style="top:61px;left:465px;width:542px;height:1px;background:#e0e0e0"></div>
<div style="top:85px;left:465px;width:542px;height:1px;background:#d1d1d1"></div>
<div style="top:108px;left:465px;width:542px;height:1px;background:#dcdcdc"></div>
<div style="top:132px;left:465px;width:542px;height:1px;background:#d6d6d6"></div>
<div style="top:155px;left:465px;width:542px;height:1px;background:#d8d8d8"></div>
<div style="top:179px;left:465px;width:542px;height:1px;background:#dadada"></div>
<div style="top:202px;left:465px;width:542px;height:1px;background:#d3d3d3"></div>
<div style="top:226px;left:465px;width:542px;height:1px;background:#dedede"></div>
<div style="top:249px;left:465px;width:542px;height:1px;background:#cfcfcf"></div>
<div style="top:273px;left:465px;width:542px;height:1px;background:#e2e2e2"></div>
<div style="top:296px;left:465px;width:542px;height:1px;background:#cacaca"></div>
<div style="top:320px;left:465px;width:542px;height:1px;background:#e6e6e6"></div>
<div style="top:343px;left:465px;width:542px;height:1px;background:#c5c5c5"></div>
<div style="left:465px;top:15px;width:1px;height:329px;background:#c4c4c4;mix-blend-mode:darken"></div>
<div class="vl dash" style="left:516px;top:15px;height:329px"></div>
<div style="left:569px;top:15px;width:1px;height:329px;background:#e8e8e8;mix-blend-mode:darken"></div>
<div style="left:620px;top:15px;width:1px;height:329px;background:#d4d4d4;mix-blend-mode:darken"></div>
<div style="left:672px;top:15px;width:1px;height:329px;background:#cccccc;mix-blend-mode:darken"></div>
<div style="left:724px;top:15px;width:1px;height:329px;background:#e2e2e2;mix-blend-mode:darken"></div>
<div style="left:775px;top:15px;width:1px;height:329px;background:#e2e2e2;mix-blend-mode:darken"></div>
<div style="left:827px;top:15px;width:1px;height:329px;background:#cccccc;mix-blend-mode:darken"></div>
<div style="left:879px;top:15px;width:1px;height:329px;background:#d4d4d4;mix-blend-mode:darken"></div>
<div style="left:931px;top:15px;width:1px;height:329px;background:#e8e8e8;mix-blend-mode:darken"></div>
<div style="left:982px;top:15px;width:1px;height:329px;background:#dbdbdb;mix-blend-mode:darken"></div>
<span class="t rn" style="top:26px">14</span>
<div style="left:0;top:38px;width:21px;height:1px;background:#c8c8c8"></div>
<div style="left:21px;top:15px;width:444.5px;height:23px;background:#989898;z-index:1"></div>
<span class="t hd" style="left:23.4px;top:23px;z-index:2;transform-origin:0 8px;transform:scale(0.885,0.94)">YOUNG URBAN CORE</span>
<span class="t rn" style="top:49px">15</span>
<div style="left:0;top:61px;width:21px;height:1px;background:#c8c8c8"></div>
<div style="left:21.0px;top:39px;width:234.8px;height:22px;background:#f9f9f9"></div>
<div style="left:21.0px;top:61px;width:234.8px;height:1px;background:#fdfdfd"></div>
<div style="left:255.8px;top:39px;width:48.6px;height:22px;background:#fff"></div>
<div style="left:255.8px;top:61px;width:48.6px;height:1px;background:#ececec"></div>
<div style="left:304.4px;top:39px;width:62.4px;height:22px;background:#e3edf8"></div>
<div style="left:304.4px;top:61px;width:62.4px;height:1px;background:#e3edf8"></div>
<div style="left:366.8px;top:39px;width:61.2px;height:22px;background:#fff"></div>
<div style="left:366.8px;top:61px;width:61.2px;height:1px;background:#ececec"></div>
<div style="left:428.0px;top:39px;width:37.5px;height:22px;background:#e3edf8"></div>
<div style="left:428.0px;top:61px;width:37.5px;height:1px;background:#e3edf8"></div>
<div style="left:21px;top:39px;width:234.0px;height:22px;overflow:hidden"><span class="t cell lb" style="left:2.6px;top:7px;letter-spacing:-0.08px">Households in U3: Young Urban Core, 2020</span></div>
<span class="t cell nm" style="left:255.8px;width:46.9px;top:46px">392,197</span>
<span class="t cell nm pc" style="left:304.4px;width:59.8px;top:46px">16.83%</span>
<span class="t cell nm" style="left:366.8px;width:59.5px;top:46px">1,218,639</span>
<span class="t cell nm pc" style="left:428.0px;width:34.9px;top:46px">8.15%</span>
<span class="t rn" style="top:73px">16</span>
<div style="left:0;top:85px;width:21px;height:1px;background:#c8c8c8"></div>
<div style="left:21.0px;top:62px;width:234.8px;height:23px;background:#f9f9f9"></div>
<div style="left:21.0px;top:85px;width:234.8px;height:1px;background:#fdfdfd"></div>
<div style="left:255.8px;top:62px;width:48.6px;height:23px;background:#fff"></div>
<div style="left:255.8px;top:85px;width:48.6px;height:1px;background:#ececec"></div>
<div style="left:304.4px;top:62px;width:62.4px;height:23px;background:#e3edf8"></div>
<div style="left:304.4px;top:85px;width:62.4px;height:1px;background:#e3edf8"></div>
<div style="left:366.8px;top:62px;width:61.2px;height:23px;background:#fff"></div>
<div style="left:366.8px;top:85px;width:61.2px;height:1px;background:#ececec"></div>
<div style="left:428.0px;top:62px;width:37.5px;height:23px;background:#e3edf8"></div>
<div style="left:428.0px;top:85px;width:37.5px;height:1px;background:#e3edf8"></div>
<div style="left:21px;top:62px;width:234.0px;height:23px;overflow:hidden"><span class="t cell lb" style="left:2.6px;top:7px;letter-spacing:-0.154px">Households in Segment 12: Eat, Play, Love, 2020</span></div>
<span class="t cell nm" style="left:255.8px;width:46.9px;top:69px">236,665</span>
<span class="t cell nm pc" style="left:304.4px;width:59.8px;top:69px">10.16%</span>
<span class="t cell nm" style="left:366.8px;width:59.5px;top:69px">388,225</span>
<span class="t cell nm pc" style="left:428.0px;width:34.9px;top:69px">2.60%</span>
<span class="t rn" style="top:96px">17</span>
<div style="left:0;top:108px;width:21px;height:1px;background:#c8c8c8"></div>
<div style="left:21.0px;top:86px;width:234.8px;height:22px;background:#f9f9f9"></div>
<div style="left:21.0px;top:108px;width:234.8px;height:1px;background:#fdfdfd"></div>
<div style="left:255.8px;top:86px;width:48.6px;height:22px;background:#fff"></div>
<div style="left:255.8px;top:108px;width:48.6px;height:1px;background:#ececec"></div>
<div style="left:304.4px;top:86px;width:62.4px;height:22px;background:#e3edf8"></div>
<div style="left:304.4px;top:108px;width:62.4px;height:1px;background:#e3edf8"></div>
<div style="left:366.8px;top:86px;width:61.2px;height:22px;background:#fff"></div>
<div style="left:366.8px;top:108px;width:61.2px;height:1px;background:#ececec"></div>
<div style="left:428.0px;top:86px;width:37.5px;height:22px;background:#e3edf8"></div>
<div style="left:428.0px;top:108px;width:37.5px;height:1px;background:#e3edf8"></div>
<div style="left:21px;top:86px;width:234.0px;height:22px;overflow:hidden"><span class="t cell lb" style="left:2.6px;top:7px;letter-spacing:-0.06px">Households in Segment 22: Indieville, 2020</span></div>
<span class="t cell nm" style="left:255.8px;width:46.9px;top:93px">110,728</span>
<span class="t cell nm pc" style="left:304.4px;width:59.8px;top:93px">4.75%</span>
<span class="t cell nm" style="left:366.8px;width:59.5px;top:93px">211,935</span>
<span class="t cell nm pc" style="left:428.0px;width:34.9px;top:93px">1.42%</span>
<span class="t rn" style="top:120px">18</span>
<div style="left:0;top:132px;width:21px;height:1px;background:#c8c8c8"></div>
<div style="left:21.0px;top:109px;width:234.8px;height:23px;background:#f9f9f9"></div>
<div style="left:21.0px;top:132px;width:234.8px;height:1px;background:#fdfdfd"></div>
<div style="left:255.8px;top:109px;width:48.6px;height:23px;background:#fff"></div>
<div style="left:255.8px;top:132px;width:48.6px;height:1px;background:#ececec"></div>
<div style="left:304.4px;top:109px;width:62.4px;height:23px;background:#e3edf8"></div>
<div style="left:304.4px;top:132px;width:62.4px;height:1px;background:#e3edf8"></div>
<div style="left:366.8px;top:109px;width:61.2px;height:23px;background:#fff"></div>
<div style="left:366.8px;top:132px;width:61.2px;height:1px;background:#ececec"></div>
<div style="left:428.0px;top:109px;width:37.5px;height:23px;background:#e3edf8"></div>
<div style="left:428.0px;top:132px;width:37.5px;height:1px;background:#e3edf8"></div>
<div style="left:21px;top:109px;width:234.0px;height:23px;overflow:hidden"><span class="t cell lb" style="left:2.6px;top:7px;letter-spacing:-0.159px">Households in Segment 40: Les Énerjeunes, 2020</span></div>
<span class="t cell nm" style="left:255.8px;width:46.9px;top:116px">0</span>
<span class="t cell nm pc" style="left:304.4px;width:59.8px;top:116px">0.00%</span>
<span class="t cell nm" style="left:366.8px;width:59.5px;top:116px">243,021</span>
<span class="t cell nm pc" style="left:428.0px;width:34.9px;top:116px">1.63%</span>
<span class="t rn" style="top:143px">19</span>
<div style="left:0;top:155px;width:21px;height:1px;background:#c8c8c8"></div>
<div style="left:21.0px;top:133px;width:234.8px;height:22px;background:#f9f9f9"></div>
<div style="left:21.0px;top:155px;width:234.8px;height:1px;background:#fdfdfd"></div>
<div style="left:255.8px;top:133px;width:48.6px;height:22px;background:#fff"></div>
<div style="left:255.8px;top:155px;width:48.6px;height:1px;background:#ececec"></div>
<div style="left:304.4px;top:133px;width:62.4px;height:22px;background:#e3edf8"></div>
<div style="left:304.4px;top:155px;width:62.4px;height:1px;background:#e3edf8"></div>
<div style="left:366.8px;top:133px;width:61.2px;height:22px;background:#fff"></div>
<div style="left:366.8px;top:155px;width:61.2px;height:1px;background:#ececec"></div>
<div style="left:428.0px;top:133px;width:37.5px;height:22px;background:#e3edf8"></div>
<div style="left:428.0px;top:155px;width:37.5px;height:1px;background:#e3edf8"></div>
<div style="left:21px;top:133px;width:234.0px;height:22px;overflow:hidden"><span class="t cell lb" style="left:2.6px;top:7px;letter-spacing:-0.11px">Households in Segment 47: Social Networkers, 2020</span></div>
<span class="t cell nm" style="left:255.8px;width:46.9px;top:140px">34,395</span>
<span class="t cell nm pc" style="left:304.4px;width:59.8px;top:140px">1.48%</span>
<span class="t cell nm" style="left:366.8px;width:59.5px;top:140px">190,926</span>
<span class="t cell nm pc" style="left:428.0px;width:34.9px;top:140px">1.28%</span>
<span class="t rn" style="top:167px">20</span>
<div style="left:0;top:179px;width:21px;height:1px;background:#c8c8c8"></div>
<div style="left:21.0px;top:156px;width:234.8px;height:23px;background:#f9f9f9"></div>
<div style="left:21.0px;top:179px;width:234.8px;height:1px;background:#fdfdfd"></div>
<div style="left:255.8px;top:156px;width:48.6px;height:23px;background:#fff"></div>
<div style="left:255.8px;top:179px;width:48.6px;height:1px;background:#ececec"></div>
<div style="left:304.4px;top:156px;width:62.4px;height:23px;background:#e3edf8"></div>
<div style="left:304.4px;top:179px;width:62.4px;height:1px;background:#e3edf8"></div>
<div style="left:366.8px;top:156px;width:61.2px;height:23px;background:#fff"></div>
<div style="left:366.8px;top:179px;width:61.2px;height:1px;background:#ececec"></div>
<div style="left:428.0px;top:156px;width:37.5px;height:23px;background:#e3edf8"></div>
<div style="left:428.0px;top:179px;width:37.5px;height:1px;background:#e3edf8"></div>
<div style="left:21px;top:156px;width:234.0px;height:23px;overflow:hidden"><span class="t cell lb" style="left:2.6px;top:7px;letter-spacing:-0.05px">Households in Segment 55: Enclaves Multiethniques, 2020</span></div>
<span class="t cell nm" style="left:255.8px;width:46.9px;top:163px">10,409</span>
<span class="t cell nm pc" style="left:304.4px;width:59.8px;top:163px">0.45%</span>
<span class="t cell nm" style="left:366.8px;width:59.5px;top:163px">184,532</span>
<span class="t cell nm pc" style="left:428.0px;width:34.9px;top:163px">1.23%</span>
<span class="t rn" style="top:190px">21</span>
<div style="left:0;top:202px;width:21px;height:1px;background:#c8c8c8"></div>
<div style="left:21px;top:179px;width:444.5px;height:24px;background:#989898;z-index:1"></div>
<span class="t hd" style="left:23.4px;top:187px;z-index:2;transform-origin:0 8px;transform:scale(0.885,0.94)">URBAN DIVERSITY</span>
<span class="t rn" style="top:214px">22</span>
<div style="left:0;top:226px;width:21px;height:1px;background:#c8c8c8"></div>
<div style="left:21.0px;top:203px;width:234.8px;height:23px;background:#f9f9f9"></div>
<div style="left:21.0px;top:226px;width:234.8px;height:1px;background:#fdfdfd"></div>
<div style="left:255.8px;top:203px;width:48.6px;height:23px;background:#fff"></div>
<div style="left:255.8px;top:226px;width:48.6px;height:1px;background:#ececec"></div>
<div style="left:304.4px;top:203px;width:62.4px;height:23px;background:#e3edf8"></div>
<div style="left:304.4px;top:226px;width:62.4px;height:1px;background:#e3edf8"></div>
<div style="left:366.8px;top:203px;width:61.2px;height:23px;background:#fff"></div>
<div style="left:366.8px;top:226px;width:61.2px;height:1px;background:#ececec"></div>
<div style="left:428.0px;top:203px;width:37.5px;height:23px;background:#e3edf8"></div>
<div style="left:428.0px;top:226px;width:37.5px;height:1px;background:#e3edf8"></div>
<div style="left:21px;top:203px;width:234.0px;height:23px;overflow:hidden"><span class="t cell lb" style="left:2.6px;top:7px;letter-spacing:-0.016px">Households in U4: Urban Diversity, 2020</span></div>
<span class="t cell nm" style="left:255.8px;width:46.9px;top:210px">451,616</span>
<span class="t cell nm pc" style="left:304.4px;width:59.8px;top:210px">19.38%</span>
<span class="t cell nm" style="left:366.8px;width:59.5px;top:210px">785,636</span>
<span class="t cell nm pc" style="left:428.0px;width:34.9px;top:210px">5.26%</span>
<span class="t rn" style="top:237px">23</span>
<div style="left:0;top:249px;width:21px;height:1px;background:#c8c8c8"></div>
<div style="left:21.0px;top:227px;width:234.8px;height:22px;background:#f9f9f9"></div>
<div style="left:21.0px;top:249px;width:234.8px;height:1px;background:#fdfdfd"></div>
<div style="left:255.8px;top:227px;width:48.6px;height:22px;background:#fff"></div>
<div style="left:255.8px;top:249px;width:48.6px;height:1px;background:#ececec"></div>
<div style="left:304.4px;top:227px;width:62.4px;height:22px;background:#e3edf8"></div>
<div style="left:304.4px;top:249px;width:62.4px;height:1px;background:#e3edf8"></div>
<div style="left:366.8px;top:227px;width:61.2px;height:22px;background:#fff"></div>
<div style="left:366.8px;top:249px;width:61.2px;height:1px;background:#ececec"></div>
<div style="left:428.0px;top:227px;width:37.5px;height:22px;background:#e3edf8"></div>
<div style="left:428.0px;top:249px;width:37.5px;height:1px;background:#e3edf8"></div>
<div style="left:21px;top:227px;width:234.0px;height:22px;overflow:hidden"><span class="t cell lb" style="left:2.6px;top:7px;letter-spacing:-0.077px">Households in Segment 15: South Asian Enterprise, 2020</span></div>
<span class="t cell nm" style="left:255.8px;width:46.9px;top:234px">164,607</span>
<span class="t cell nm pc" style="left:304.4px;width:59.8px;top:234px">7.06%</span>
<span class="t cell nm" style="left:366.8px;width:59.5px;top:234px">201,433</span>
<span class="t cell nm pc" style="left:428.0px;width:34.9px;top:234px">1.35%</span>
<span class="t rn" style="top:261px">24</span>
<div style="left:0;top:273px;width:21px;height:1px;background:#c8c8c8"></div>
<div style="left:21.0px;top:250px;width:234.8px;height:23px;background:#f9f9f9"></div>
<div style="left:21.0px;top:273px;width:234.8px;height:1px;background:#fdfdfd"></div>
<div style="left:255.8px;top:250px;width:48.6px;height:23px;background:#fff"></div>
<div style="left:255.8px;top:273px;width:48.6px;height:1px;background:#ececec"></div>
<div style="left:304.4px;top:250px;width:62.4px;height:23px;background:#e3edf8"></div>
<div style="left:304.4px;top:273px;width:62.4px;height:1px;background:#e3edf8"></div>
<div style="left:366.8px;top:250px;width:61.2px;height:23px;background:#fff"></div>
<div style="left:366.8px;top:273px;width:61.2px;height:1px;background:#ececec"></div>
<div style="left:428.0px;top:250px;width:37.5px;height:23px;background:#e3edf8"></div>
<div style="left:428.0px;top:273px;width:37.5px;height:1px;background:#e3edf8"></div>
<div style="left:21px;top:250px;width:234.0px;height:23px;overflow:hidden"><span class="t cell lb" style="left:2.6px;top:7px;letter-spacing:-0.107px">Households in Segment 17: Asian Avenues, 2020</span></div>
<span class="t cell nm" style="left:255.8px;width:46.9px;top:257px">2,917</span>
<span class="t cell nm pc" style="left:304.4px;width:59.8px;top:257px">0.13%</span>
<span class="t cell nm" style="left:366.8px;width:59.5px;top:257px">84,727</span>
<span class="t cell nm pc" style="left:428.0px;width:34.9px;top:257px">0.57%</span>
<span class="t rn" style="top:284px">25</span>
<div style="left:0;top:296px;width:21px;height:1px;background:#c8c8c8"></div>
<div style="left:21.0px;top:274px;width:234.8px;height:22px;background:#f9f9f9"></div>
<div style="left:21.0px;top:296px;width:234.8px;height:1px;background:#fdfdfd"></div>
<div style="left:255.8px;top:274px;width:48.6px;height:22px;background:#fff"></div>
<div style="left:255.8px;top:296px;width:48.6px;height:1px;background:#ececec"></div>
<div style="left:304.4px;top:274px;width:62.4px;height:22px;background:#e3edf8"></div>
<div style="left:304.4px;top:296px;width:62.4px;height:1px;background:#e3edf8"></div>
<div style="left:366.8px;top:274px;width:61.2px;height:22px;background:#fff"></div>
<div style="left:366.8px;top:296px;width:61.2px;height:1px;background:#ececec"></div>
<div style="left:428.0px;top:274px;width:37.5px;height:22px;background:#e3edf8"></div>
<div style="left:428.0px;top:296px;width:37.5px;height:1px;background:#e3edf8"></div>
<div style="left:21px;top:274px;width:234.0px;height:22px;overflow:hidden"><span class="t cell lb" style="left:2.6px;top:7px;letter-spacing:-0.117px">Households in Segment 61: Came From Away, 2020</span></div>
<span class="t cell nm" style="left:255.8px;width:46.9px;top:281px">271,606</span>
<span class="t cell nm pc" style="left:304.4px;width:59.8px;top:281px">11.66%</span>
<span class="t cell nm" style="left:366.8px;width:59.5px;top:281px">335,922</span>
<span class="t cell nm pc" style="left:428.0px;width:34.9px;top:281px">2.25%</span>
<span class="t rn" style="top:308px">26</span>
<div style="left:0;top:320px;width:21px;height:1px;background:#c8c8c8"></div>
<div style="left:21.0px;top:297px;width:234.8px;height:23px;background:#f9f9f9"></div>
<div style="left:21.0px;top:320px;width:234.8px;height:1px;background:#fdfdfd"></div>
<div style="left:255.8px;top:297px;width:48.6px;height:23px;background:#fff"></div>
<div style="left:255.8px;top:320px;width:48.6px;height:1px;background:#ececec"></div>
<div style="left:304.4px;top:297px;width:62.4px;height:23px;background:#e3edf8"></div>
<div style="left:304.4px;top:320px;width:62.4px;height:1px;background:#e3edf8"></div>
<div style="left:366.8px;top:297px;width:61.2px;height:23px;background:#fff"></div>
<div style="left:366.8px;top:320px;width:61.2px;height:1px;background:#ececec"></div>
<div style="left:428.0px;top:297px;width:37.5px;height:23px;background:#e3edf8"></div>
<div style="left:428.0px;top:320px;width:37.5px;height:1px;background:#e3edf8"></div>
<div style="left:21px;top:297px;width:234.0px;height:23px;overflow:hidden"><span class="t cell lb" style="left:2.6px;top:7px;letter-spacing:0.003px">Households in Segment 64: Midtown Movers, 2020</span></div>
<span class="t cell nm" style="left:255.8px;width:46.9px;top:304px">12,486</span>
<span class="t cell nm pc" style="left:304.4px;width:59.8px;top:304px">0.54%</span>
<span class="t cell nm" style="left:366.8px;width:59.5px;top:304px">163,554</span>
<span class="t cell nm pc" style="left:428.0px;width:34.9px;top:304px">1.09%</span>
<span class="t rn" style="top:331px">27</span>
<div style="left:0;top:343px;width:21px;height:1px;background:#c8c8c8"></div>
<div style="left:21px;top:320px;width:444.5px;height:23px;background:#989898;z-index:1"></div>
<span class="t hd" style="left:23.4px;top:328px;z-index:2;transform-origin:0 8px;transform:scale(0.885,0.94)">YOUNGER URBAN MIX</span>
<div style="left:20px;top:15px;width:1px;height:329px;background:#c8c8c8"></div>
<!--GRID-END-->
</div>

<!-- V SCROLLBAR -->
<div id="vscroll" style="left:1007px;top:163px;width:17px;height:347px;background:#e6e6e6;z-index:3">
  <div style="left:0;top:0;width:1px;height:344px;background:#b4b4b4"></div>
  <div style="left:2px;top:0;width:13.5px;height:346px;background:#d0d0d0"></div>
  <div style="left:2px;top:0;width:13.5px;height:14px;background:#fff;border:1px solid #cfcfcf"></div>
  <svg style="left:5px;top:4.5px" width="8" height="5" viewBox="0 0 8 5"><path d="M0.6 4.4H7.4L4 1Z" fill="#606060"/></svg>
  <div style="left:2px;top:52px;width:13.5px;height:40px;background:#fff"></div>
  <div style="left:2px;top:333px;width:13.5px;height:13.5px;background:#fff;border:1px solid #cfcfcf"></div>
  <svg style="left:5px;top:337.5px" width="8" height="5" viewBox="0 0 8 5"><path d="M0.6 0.6H7.4L4 4Z" fill="#606060"/></svg>
</div>

<!-- SHEET BAR -->
<div id="sheetbar">
  <div style="left:0;top:0;width:1009px;height:1px;background:#d6d6d6"></div>
  <div style="left:0;top:1px;width:1009px;height:1px;background:#ababab"></div>
  <!-- nav arrows -->
  <svg style="left:15px;top:7px" width="5" height="7" viewBox="0 0 5 7"><path d="M4.5 0.5V6.5L0.8 3.5Z" fill="#c8c8c8"/></svg>
  <svg style="left:33px;top:7px" width="5" height="7" viewBox="0 0 5 7"><path d="M0.5 0.5V6.5L4.2 3.5Z" fill="#c8c8c8"/></svg>
  <!-- tab -->
  <div style="left:63px;top:1px;width:129.5px;height:17px;background:#fff;border-left:1px solid #c6c6c6;border-right:1px solid #c6c6c6"></div>
  <div style="left:63px;top:16.4px;width:129.5px;height:1.6px;background:#217346"></div>
  <span class="t" style="left:69px;top:4px;font-size:10.5px;font-weight:bold;color:#217346">SimplyAnalytics Export</span>
  <!-- plus -->
  <svg style="left:213px;top:4px" width="12" height="12" viewBox="0 0 12 12"><circle cx="6" cy="6" r="5.3" fill="none" stroke="#777" stroke-width="0.9"/><path d="M3.3 6H8.7M6 3.3V8.7" stroke="#777" stroke-width="0.9"/></svg>
  <!-- dots -->
  <div style="left:611.6px;top:5.6px;width:1.8px;height:1.8px;background:#9a9a9a;box-shadow:0 3px 0 #9a9a9a,0 6px 0 #9a9a9a"></div>
  <!-- h scrollbar -->
  <div style="left:623.5px;top:3px;width:385px;height:13.5px;background:#d0d0d0"></div>
  <div style="left:623.5px;top:3px;width:13px;height:13.5px;background:#fff;border:1px solid #c4c4c4"></div>
  <svg style="left:628px;top:6px" width="5" height="7" viewBox="0 0 5 7"><path d="M4.5 0.5V6.5L0.8 3.5Z" fill="#555"/></svg>
  <div style="left:636.5px;top:3px;width:334.5px;height:13.5px;background:#fff;border-top:1px solid #c4c4c4;border-bottom:1px solid #c4c4c4"></div>
  <div style="left:995.5px;top:3px;width:13px;height:13.5px;background:#fff;border:1px solid #c4c4c4"></div>
  <svg style="left:1000px;top:6px" width="5" height="7" viewBox="0 0 5 7"><path d="M0.5 0.5V6.5L4.2 3.5Z" fill="#555"/></svg>
</div>

<!-- STATUS BAR -->
<div id="status">
  <div style="left:0;top:0;width:1024px;height:1px;background:#d4d4d4"></div>
  <div style="left:788px;top:1px;width:31px;height:17px;background:#c6c6c6"></div>
  <!-- normal view -->
  <svg style="left:797px;top:4px" width="11" height="10" viewBox="0 0 11 10"><path d="M0.5 0.5H10.5V9.5H0.5ZM0.5 3.5H10.5M0.5 6.5H10.5M3.8 0.5V9.5M7.2 0.5V9.5" fill="none" stroke="#333" stroke-width="1"/></svg>
  <!-- page layout -->
  <svg style="left:829px;top:4px" width="12" height="10" viewBox="0 0 12 10"><path d="M0.5 0.5H11V9.5H0.5Z" fill="none" stroke="#555" stroke-width="1"/><path d="M3 2.5H8.5V7.5H3Z" fill="none" stroke="#555" stroke-width="0.9"/><path d="M4.4 4.2H7.2M4.4 5.8H7.2" stroke="#777" stroke-width="0.6"/></svg>
  <!-- page break -->
  <svg style="left:861px;top:4px" width="12" height="10" viewBox="0 0 12 10"><path d="M0.5 0.5H11V9.5H0.5Z" fill="none" stroke="#555" stroke-width="1"/><path d="M3.6 0.5V5.2H11M7.2 0.5V5.2" fill="none" stroke="#555" stroke-width="0.9"/></svg>
  <!-- zoom -->
  <div style="left:887px;top:9px;width:6px;height:1px;background:#707070"></div>
  <div style="left:898px;top:9px;width:79px;height:1px;background:#999"></div>
  <div style="left:935px;top:5px;width:4px;height:9px;background:#6a6a6a"></div>
  <div style="left:981px;top:9px;width:6px;height:1px;background:#707070"></div>
  <div style="left:983.5px;top:6.5px;width:1px;height:6px;background:#707070"></div>
  <span class="t" style="left:997px;top:6px;font-size:8.1px;color:#666">100%</span>
</div>

<!-- TASKBAR -->
<div id="taskbar">
<!--TASK-START-->
  <!-- start -->
  <svg style="left:13px;top:9px" width="14" height="14" viewBox="0 0 14 14"><path d="M0 2L6 1.1V6.5H0ZM6.9 1L14 0V6.5H6.9ZM0 7.4H6V12.9L0 12ZM6.9 7.4H14V14L6.9 13Z" fill="#fff"/></svg>
  <!-- search box -->
  <div style="left:38.5px;top:0;width:275.5px;height:32px;background:#f3f3f3;border-top:1px solid #c4c4c4"></div>
  <svg style="left:47px;top:8px" width="16" height="16" viewBox="0 0 16 16"><circle cx="9.7" cy="5.8" r="4" fill="none" stroke="#222" stroke-width="1.1"/><path d="M6.8 8.7L1.2 14.2" stroke="#222" stroke-width="1.2"/></svg>
  <span class="t" style="left:70.5px;top:10.5px;font-size:11.9px;color:#3a3a3a">Type here to search</span>
  <!-- cortana -->
  <svg style="left:325px;top:9px" width="15" height="15" viewBox="0 0 15 15"><circle cx="7.5" cy="7.2" r="5.2" fill="none" stroke="#fff" stroke-width="1.7"/></svg>
  <!-- task view -->
  <svg style="left:364px;top:9px" width="16" height="14" viewBox="0 0 16 14"><path d="M0.5 3.5H9.5V9.5H0.5Z" fill="none" stroke="#f0f0f0" stroke-width="0.9"/><path d="M0.5 1H9.5M0.5 12H9.5M12.5 0.5V12.5" stroke="#dcdcdc" stroke-width="0.8" fill="none"/><path d="M12 5H13.5V8H12Z" fill="#f0f0f0"/></svg>
  <!-- file explorer -->
  <svg style="left:399px;top:8px" width="20" height="16" viewBox="0 0 20 16"><path d="M0.5 2.2Q0.5 1 1.7 1H7L9 3H18.3Q19.5 3 19.5 4.2V14H0.5Z" fill="#f6c544"/><path d="M0.5 5H19.5V14.8H0.5Z" fill="#fbd867"/><path d="M3.5 8H16.5V14.8H3.5Z" fill="#3d8fe0"/><path d="M6.5 11H13.5V14.8H6.5Z" fill="#fbd867"/></svg>
  <div class="ul" style="left:396px;width:26px"></div>
  <!-- store -->
  <svg style="left:431px;top:6px" width="21" height="21" viewBox="0 0 21 21"><path d="M6.5 6V4.5Q6.5 1.5 10.5 1.5Q14.5 1.5 14.5 4.5V6" fill="none" stroke="#e8e8e8" stroke-width="1.4"/><path d="M1.5 6H19.5V19.5H1.5Z" fill="#f4f4f4"/><path d="M7.3 9.3H10.1V12.1H7.3Z" fill="#f25022"/><path d="M10.9 9.3H13.7V12.1H10.9Z" fill="#7fba00"/><path d="M7.3 12.9H10.1V15.7H7.3Z" fill="#00a4ef"/><path d="M10.9 12.9H13.7V15.7H10.9Z" fill="#ffb900"/></svg>
  <!-- mail -->
  <svg style="left:464px;top:6px" width="28" height="24" viewBox="0 0 28 24"><path d="M1 8L11 1.5L21 8V20H1Z" fill="#0f6cbd"/><path d="M3.5 7H18.5V14H3.5Z" fill="#e9f3fb"/><path d="M1 8L11 15L21 8V20.5H1Z" fill="#2a9bea"/><path d="M1 20.5L11 13.5L21 20.5Z" fill="#1583d6"/><circle cx="20" cy="16.6" r="5.6" fill="#3b3d42" stroke="#d8d8d8" stroke-width="0.9"/><text x="20" y="20" font-family="Liberation Sans" font-size="8.5" font-weight="bold" fill="#fff" text-anchor="middle">3</text></svg>
  <!-- netflix -->
  <div style="left:499px;top:6px;width:19px;height:20px;background:#000"></div>
  <svg style="left:503.5px;top:9.5px" width="10" height="13" viewBox="0 0 10 13"><path d="M0.8 0.3H3.3L6.7 9V0.3H9.2V12.7H6.7L3.3 4V12.7H0.8Z" fill="#e50914"/></svg>
  <!-- chrome -->
  <svg style="left:532px;top:6.5px" width="19" height="19" viewBox="0 0 19 19"><circle cx="9.5" cy="9.5" r="9" fill="#fff"/><path d="M9.5 9.5L1.7 5A9 9 0 0 1 17.3 5Z" fill="#ea4335"/><path d="M9.5 9.5L17.3 5A9 9 0 0 1 9.5 18.5Z" fill="#fbbc05"/><path d="M9.5 9.5L9.5 18.5A9 9 0 0 1 1.7 5Z" fill="#34a853"/><circle cx="9.5" cy="9.5" r="4.3" fill="#fff"/><circle cx="9.5" cy="9.5" r="3.3" fill="#4285f4"/></svg>
  <div class="ul" style="left:528px;width:26px"></div>
  <!-- spotify (highlighted) -->
  <div style="left:558.5px;top:0;width:32px;height:32px;background:#b5713a"></div>
  <svg style="left:564.5px;top:6px" width="20" height="20" viewBox="0 0 20 20"><circle cx="10" cy="10" r="9.6" fill="#1ed760"/><path d="M4.5 7.3Q10 5.6 15.6 8.3" fill="none" stroke="#000" stroke-width="1.9" stroke-linecap="round"/><path d="M5.2 10.5Q10 9.2 14.6 11.4" fill="none" stroke="#000" stroke-width="1.6" stroke-linecap="round"/><path d="M5.9 13.5Q10 12.5 13.6 14.2" fill="none" stroke="#000" stroke-width="1.3" stroke-linecap="round"/></svg>
  <div class="ul" style="left:558.5px;width:32px;background:#f58b1f"></div>
  <!-- office -->
  <svg style="left:599.5px;top:6.3px" width="16" height="19" viewBox="0 0 16 19">
  <path d="M0.4 4.8Q0.4 3.8 1.4 3.3L9.6 0.3V4.4L4.8 6.2V13L0.4 14.6Z" fill="#b91c22"/><path d="M0.4 10.5L4.8 9.6V13L0.4 14.6Z" fill="#c6398a" opacity="0.75"/>
  <path d="M9.6 0.3L14.6 1.8Q15.4 2.1 15.4 3V16Q15.4 16.9 14.6 17.2L9.6 18.7Z" fill="#ec6a18"/><path d="M9.6 0.3L14.6 1.8Q15.4 2.1 15.4 3V8L9.6 8Z" fill="#f5951f" opacity="0.85"/><path d="M9.6 13H15.4V16Q15.4 16.9 14.6 17.2L9.6 18.7Z" fill="#de3c12" opacity="0.8"/>
  <path d="M0.4 14.6L4.8 13L9.6 15.4V18.7L3.2 16.4Q2.4 15.8 0.4 14.6Z" fill="#d6213a"/></svg>
  <!-- whatsapp -->
  <svg style="left:630.6px;top:6px" width="20" height="20" viewBox="0 0 22 22"><path d="M11 1.2A9.6 9.6 0 0 0 2.7 15.6L1.2 20.9L6.6 19.4A9.6 9.6 0 1 0 11 1.2Z" fill="#fff"/><path d="M11 2.8A8 8 0 0 0 4.3 15.3L3.5 18.6L6.9 17.7A8 8 0 1 0 11 2.8Z" fill="#2cb742"/><path d="M7.8 6.5Q8.5 6.2 8.9 7L9.6 8.6Q9.7 9.1 9.2 9.6L8.8 10.1Q10 12.3 12.3 13.3L12.9 12.6Q13.3 12.2 13.8 12.4L15.4 13.2Q15.9 13.5 15.7 14.2Q15 16 13.3 15.8Q8.3 14.7 6.6 9.5Q6.3 7.5 7.8 6.5Z" fill="#fff"/></svg>
  <div class="ul" style="left:628px;width:25px"></div>
  <!-- acrobat -->
  <div style="left:664px;top:6px;width:19px;height:20px;background:#a30b0b"></div>
  <svg style="left:667px;top:10px" width="13" height="12" viewBox="0 0 13 12"><path d="M1 10.5Q4.5 8 6 2.5Q6.3 1 5.8 1Q5.2 1.2 5.6 3Q6.8 7 11.8 8.2Q12.5 8.6 11.5 8.9Q6 8 1 10.5Z" fill="none" stroke="#fff" stroke-width="0.9"/></svg>
  <div class="ul" style="left:661px;width:25px"></div>
  <!-- excel (active) -->
  <div style="left:690.5px;top:0;width:29px;height:32px;background:#5c5556"></div>
  <svg style="left:694px;top:6px" width="22" height="20" viewBox="0 0 22 20"><path d="M7 1H20.5Q21.5 1 21.5 2V18Q21.5 19 20.5 19H7Q6 19 6 18V2Q6 1 7 1Z" fill="#21a366"/><path d="M6 5.5H13.7V10H6Z" fill="#107c41"/><path d="M13.7 1H20.5Q21.5 1 21.5 2V5.5H13.7Z" fill="#33c481"/><path d="M13.7 10H21.5V14.5H13.7Z" fill="#107c41"/><path d="M6 14.5H21.5V18Q21.5 19 20.5 19H7Q6 19 6 18Z" fill="#185c37"/><path d="M1.2 4.5H11Q12 4.5 12 5.5V14.5Q12 15.5 11 15.5H1.2Q0.2 15.5 0.2 14.5V5.5Q0.2 4.5 1.2 4.5Z" fill="#107c41"/><path d="M3.4 7L5.3 10L3.3 13H4.9L6.1 10.9L7.3 13H8.9L6.9 10L8.8 7H7.2L6.1 9L5 7Z" fill="#fff"/></svg>
  <div class="ul" style="left:690.5px;width:29px"></div>
  <div style="left:721px;top:2px;width:1px;height:28px;background:#5a5354"></div>
  <!-- paint -->
  <svg style="left:727px;top:5px" width="24" height="23" viewBox="0 0 24 23"><path d="M10.5 5Q3 5.5 1.5 11.5Q0.8 17.5 7 19.3Q10 19.8 10.3 17.5Q10.3 15.5 12.5 15.7Q17 16.2 18.6 12Q19.5 6 10.5 5Z" fill="#e9edf2" stroke="#aab4c0" stroke-width="0.6"/><circle cx="6" cy="10" r="1.7" fill="#e8443a"/><circle cx="10.5" cy="8.2" r="1.7" fill="#f3b52b"/><circle cx="15" cy="9.5" r="1.7" fill="#3ba55d"/><circle cx="5.5" cy="14.5" r="1.7" fill="#3b82e0"/><path d="M21.5 1L23 2.2L14.8 17.5L12.8 19.5L13 16.5Z" fill="#c98a3c"/><path d="M21.5 1L23 2.2L21 6L19.3 5Z" fill="#7c5a33"/><path d="M13 16.5L14.8 17.5L12.5 20.3Z" fill="#3a6fd0"/></svg>
  <div class="ul" style="left:727px;width:24px"></div>
  <!-- tray chevron -->
  <svg style="left:762px;top:12px" width="11" height="7" viewBox="0 0 11 7"><path d="M0.8 6L5.5 1.2L10.2 6" fill="none" stroke="#fff" stroke-width="1"/></svg>
  <!-- meet now -->
  <svg style="left:781px;top:8px" width="11" height="16" viewBox="0 0 11 16"><path d="M2 1.8Q5 0.8 8 1.8M2 14.2Q5 15.2 8 14.2" fill="none" stroke="#cfcfcf" stroke-width="0.7"/><path d="M0.6 4.8H7.2V11.2H0.6Z" fill="none" stroke="#e4e4e4" stroke-width="0.8"/><path d="M7.2 7.2L10 5.6V10.4L7.2 8.8Z" fill="none" stroke="#e4e4e4" stroke-width="0.7"/></svg>
  <!-- wifi -->
  <svg style="left:800px;top:9px" width="13" height="13" viewBox="0 0 13 13"><path d="M1 12A11 11 0 0 1 12 1" fill="none" stroke="#9a9596" stroke-width="1"/><path d="M4 12A8 8 0 0 1 12 4" fill="none" stroke="#fff" stroke-width="1"/><path d="M7 12A5 5 0 0 1 12 7" fill="none" stroke="#fff" stroke-width="1"/><circle cx="11" cy="11.3" r="1.3" fill="#fff"/></svg>
  <!-- onedrive w/ badge -->
  <svg style="left:817px;top:9px" width="16" height="15" viewBox="0 0 16 15"><path d="M3.5 10.5Q0.5 10.5 0.7 8Q1 5.8 3.4 6Q4.3 3 7.3 3.2Q9.6 3.4 10.3 5.5Q13.4 5 13.6 8Q13.6 10.5 11 10.5Z" fill="#e8e8e8"/><circle cx="11.3" cy="10.6" r="3.6" fill="#d9242b"/><path d="M9.4 10.6H13.2" stroke="#fff" stroke-width="0.9"/></svg>
  <!-- battery -->
  <svg style="left:838px;top:13px" width="13" height="8" viewBox="0 0 13 8"><path d="M0.6 1H10.8V6.6H0.6Z" fill="#f2f2f2" stroke="#fff" stroke-width="0.6"/><path d="M10.8 2.6H12.2V5H10.8Z" fill="#fff"/></svg>
  <!-- volume -->
  <svg style="left:856px;top:9px" width="14" height="14" viewBox="0 0 14 14"><path d="M0.6 5H2.8L5.8 2V12L2.8 9H0.6Z" fill="none" stroke="#fff" stroke-width="0.9"/><path d="M7.6 5Q8.8 7 7.6 9M9.4 3.5Q11.6 7 9.4 10.5M11.2 2Q14.2 7 11.2 12" fill="none" stroke="#fff" stroke-width="0.8"/></svg>
  <!-- dropbox w/ badge -->
  <svg style="left:875px;top:8px" width="15" height="17" viewBox="0 0 15 17"><path d="M4.8 1L8 3L4.8 5L1.6 3ZM11.2 1L14.4 3L11.2 5L8 3ZM4.8 5L8 7L4.8 9L1.6 7ZM11.2 5L14.4 7L11.2 9L8 7ZM8 8.2L11 10L8 11.8L5 10Z" fill="#fff"/><path d="M0.3 8.8H7V16.5H0.3Z" fill="#d9242b"/><text x="3.7" y="15.3" font-family="Liberation Sans" font-size="7.5" font-weight="bold" fill="#fff" text-anchor="middle">1</text></svg>
  <span class="t" style="left:897px;top:12px;font-size:8.8px;color:#fff">ENG</span>
  <span class="t" style="left:910px;width:81px;text-align:center;top:4.5px;font-size:9.3px;color:#fff">7:13 PM</span>
  <span class="t" style="left:910px;width:81px;text-align:center;top:18.8px;font-size:9.3px;color:#fff">2021-02-14</span>
  <!-- notifications -->
  <svg style="left:990px;top:7px" width="20" height="21" viewBox="0 0 20 21"><path d="M1.5 1.5H13.5V10.5H6.5L3.5 13.2V10.5H1.5Z" fill="#fff"/><path d="M3.3 4H11.7M3.3 6H11.7M3.3 8H9" stroke="#463d3f" stroke-width="0.8"/><circle cx="12.7" cy="13.7" r="5.3" fill="#37383c" stroke="#d8d8d8" stroke-width="0.8"/><text x="12.7" y="16.9" font-family="Liberation Sans" font-size="8.5" fill="#fff" text-anchor="middle">2</text></svg>

<!--TASK-END-->
</div>

</div>
</body>
</html>
